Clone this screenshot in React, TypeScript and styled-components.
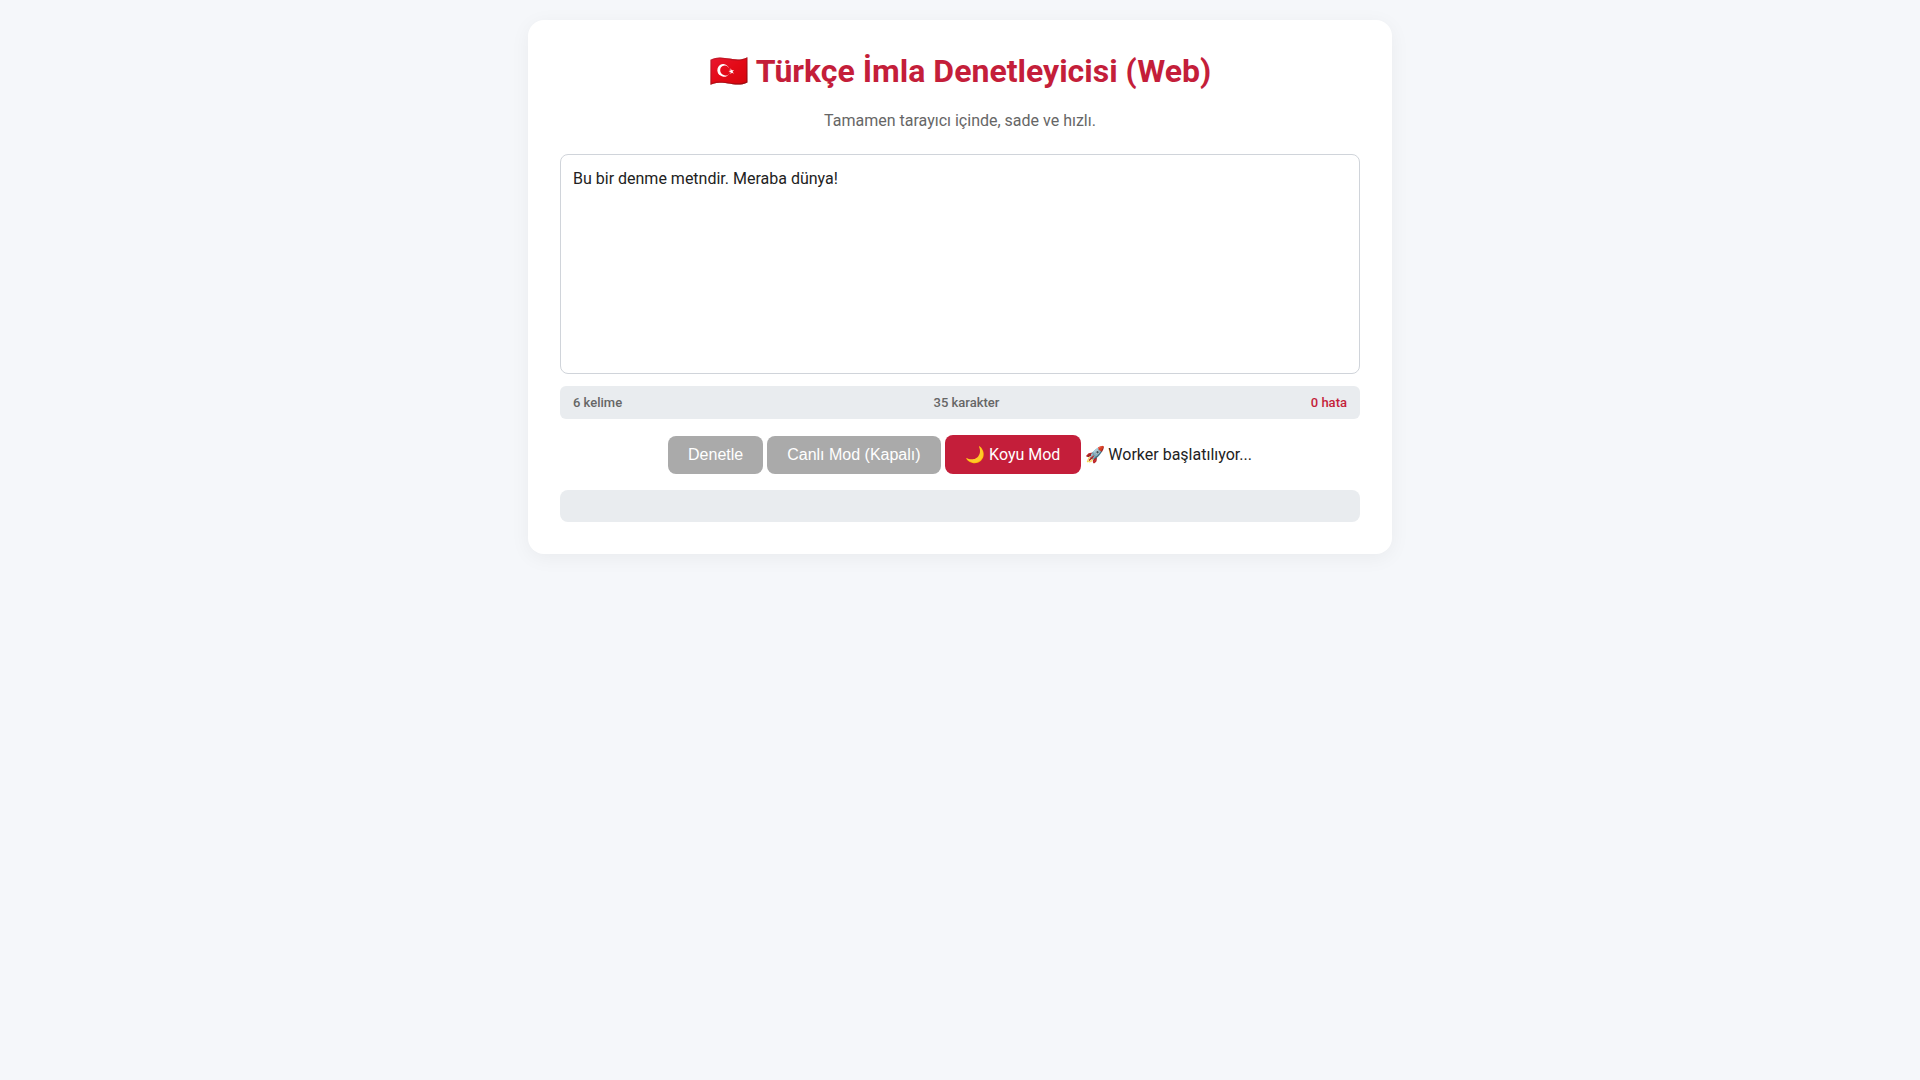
import { ReactElement } from "react"
import styled, { createGlobalStyle } from "styled-components"

const GlobalStyle = createGlobalStyle`
	body {
		margin: 0;
		background: #f5f7fa;
		color: #222;
		font-family: Roboto, "Noto Sans", sans-serif;
	}
`

const Page = styled.main`
	min-height: 100vh;
	padding-top: 20px;
	box-sizing: border-box;
`

const Card = styled.section`
	width: 800px;
	margin: 0 auto;
	padding: 32px;
	background: #fff;
	border-radius: 16px;
	box-shadow: 0 4px 20px rgba(0, 0, 0, 0.05);
`

const Title = styled.h1`
	margin: 0;
	color: #c41e3a;
	font-size: 32px;
	font-weight: 700;
	line-height: 38px;
	text-align: center;
`

const Subtitle = styled.p`
	margin: 19px 0 21px;
	color: #666;
	font-size: 16px;
	line-height: 24px;
	text-align: center;
`

const Editor = styled.textarea`
	display: block;
	width: 100%;
	height: 220px;
	padding: 12px;
	box-sizing: border-box;
	border: 1px solid #d0d4da;
	border-radius: 8px;
	background: #fff;
	color: #222;
	font-family: inherit;
	font-size: 16px;
	line-height: 1.5;
	resize: none;
	outline: none;
`

const Stats = styled.div`
	display: flex;
	justify-content: space-between;
	align-items: center;
	height: 33px;
	margin-top: 12px;
	padding: 0 13px;
	border-radius: 6px;
	background: #e9ecef;
	color: #666;
	font-size: 13px;
	font-weight: 500;
`

const ErrorCount = styled.span`
	color: #c41e3a;
`

const Actions = styled.div`
	display: flex;
	justify-content: center;
	align-items: center;
	gap: 4px;
	margin-top: 16px;
	font-size: 16px;
`

const Button = styled.button`
	padding: 10px 20.5px;
	border: 0;
	border-radius: 8px;
	background: #c41e3a;
	color: #fff;
	font-family: Roboto, sans-serif;
	font-size: 16px;
	cursor: pointer;

	&:disabled {
		padding: 10px 20px;
		background: #aaa;
		font-family: "Liberation Sans", Arial, sans-serif;
		cursor: not-allowed;
	}
`

const Status = styled.span`
	color: #222;
`

const StatusEmoji = styled.span`
	margin-right: -0.5px;
`

const Output = styled.div`
	height: 32px;
	margin-top: 16px;
	border-radius: 8px;
	background: #e9ecef;
`

const App = (): ReactElement => {
	return (
		<Page>
			<GlobalStyle />
			<Card>
				<Title>🇹🇷 Türkçe İmla Denetleyicisi (Web)</Title>
				<Subtitle>Tamamen tarayıcı içinde, sade ve hızlı.</Subtitle>
				<Editor defaultValue="Bu bir denme metndir. Meraba dünya!" />
				<Stats>
					<span>6 kelime</span>
					<span>35 karakter</span>
					<ErrorCount>0 hata</ErrorCount>
				</Stats>
				<Actions>
					<Button disabled>Denetle</Button>
					<Button disabled>Canlı Mod (Kapalı)</Button>
					<Button>🌙 Koyu Mod</Button>
					<Status><StatusEmoji>🚀</StatusEmoji> Worker başlatılıyor...</Status>
				</Actions>
				<Output />
			</Card>
		</Page>
	)
}

export default App
